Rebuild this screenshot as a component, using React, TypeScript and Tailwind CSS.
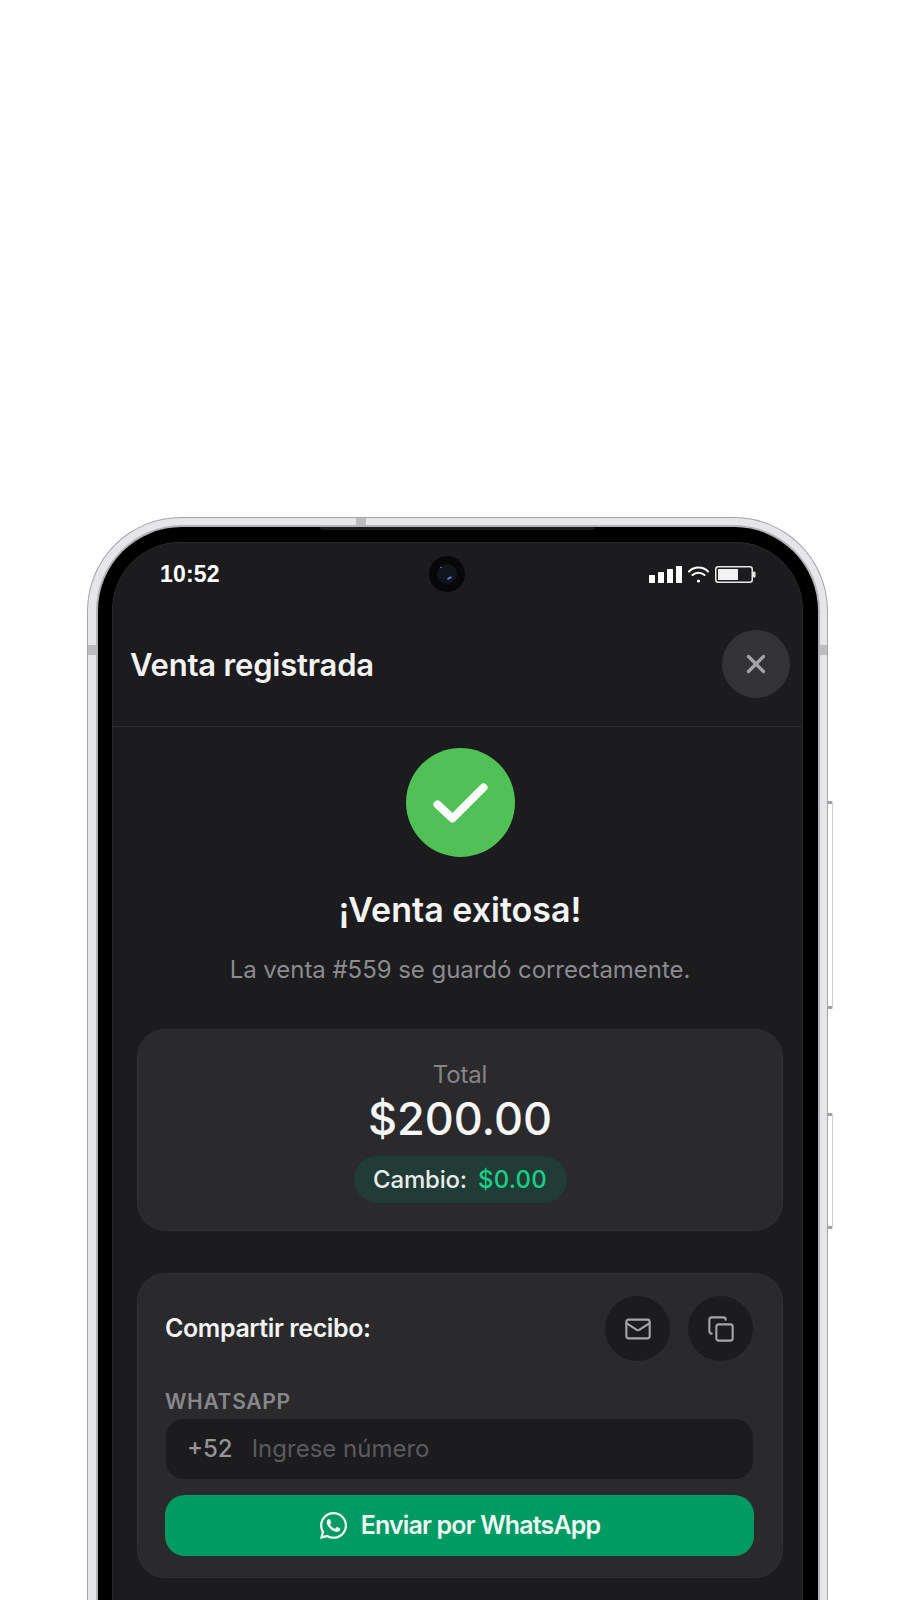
import { Copy, Mail, X } from "lucide-react";
import { FaWhatsapp } from "react-icons/fa";

export default function App() {
  return (
    <div className="h-[1600px] w-[900px] overflow-hidden bg-white pl-[87px] pt-[517px] font-['Inter',sans-serif]">
      <div className="relative h-[1300px] w-[741px]">
        {/* side keys */}
        <div className="absolute left-[741px] top-[284px] h-[208px] w-[5px] rounded-r-[2px] border-y-[3px] border-r border-y-[#a0a0a4] border-r-[#cfcfd2] bg-white" />
        <div className="absolute left-[741px] top-[596px] h-[116px] w-[5px] rounded-r-[2px] border-y-[3px] border-r border-y-[#a0a0a4] border-r-[#cfcfd2] bg-white" />
        <div className="h-full rounded-t-[94px] bg-[#a4a4a8] p-[1px]">
          <div className="relative h-full rounded-t-[93px] bg-[#e6e6e8] pl-[10px] pr-[9px] pt-[9px]">
            {/* antenna bands */}
            <div className="absolute left-0 top-[127px] h-[10px] w-[9px] bg-[#bcbcc0]" />
            <div className="absolute right-0 top-[127px] h-[10px] w-[8px] bg-[#bcbcc0]" />
            <div className="absolute left-[268px] top-0 h-[8px] w-[10px] bg-[#bcbcc0]" />
            <div className="relative h-full rounded-t-[84px] bg-black pl-[14px] pr-[15px] pt-[15px] shadow-[0_0_0_2px_#b4b4b8]">
              {/* earpiece */}
              <div className="absolute left-[222px] top-[0px] h-[3px] w-[275px] rounded-b-[3px] bg-[#1a1a1a]" />
              <div className="relative h-full rounded-t-[68px] border border-b-0 border-[#29292b] bg-[#1c1c1e] text-white">
                {/* camera */}
                <div className="absolute left-[316px] top-[13px] flex h-[36px] w-[36px] items-center justify-center rounded-full bg-[#08080a]">
                  <div className="relative h-[20px] w-[20px] rounded-full bg-[#14141c]">
                    <div className="absolute left-[3px] top-[3px] h-[1px] w-[2px] rounded-full bg-[#6a70d0]" />
                    <div className="absolute left-[10px] top-[13px] h-[2px] w-[5px] -rotate-[30deg] rounded-full bg-[#6a78d8]" />
                  </div>
                </div>

                {/* status bar */}
                <div className="flex h-[63px] items-center justify-between pl-[47px] pr-[46px]">
                  <span className="font-['Liberation_Sans',sans-serif] text-[23px] font-bold leading-none tracking-[0.2px] text-white">10:52</span>
                  <div className="flex items-center gap-[6px]">
                    <svg width="33" height="17" viewBox="0 0 33 17" fill="#fff">
                      <rect x="0" y="9" width="6" height="8" rx="0.5" />
                      <rect x="9" y="6" width="6" height="11" rx="0.5" />
                      <rect x="18" y="3" width="6" height="14" rx="0.5" />
                      <rect x="27" y="0" width="6" height="17" rx="0.5" />
                    </svg>
                    <svg width="21" height="17" viewBox="0 0 21 17" fill="none" stroke="#fff" strokeWidth="2" strokeLinecap="round">
                      <path d="M1 5.5C6.3 0.3 14.7 0.3 20 5.5" />
                      <path d="M4.5 9C7.8 6 13.2 6 16.5 9" />
                      <circle cx="10.5" cy="15" r="1.6" fill="#fff" stroke="none" />
                    </svg>
                    <svg width="41" height="17" viewBox="0 0 41 17" fill="none">
                      <rect x="0.75" y="0.75" width="36.5" height="15.5" rx="2.5" stroke="#e8e8e8" strokeWidth="1.5" />
                      <rect x="3" y="3" width="20" height="11" fill="#f2f2f2" />
                      <rect x="38" y="5.5" width="2.5" height="6" rx="1" fill="#e8e8e8" />
                    </svg>
                  </div>
                </div>

                {/* header */}
                <div className="flex items-center justify-between border-b border-[#2f2f31] pb-[28px] pl-[17px] pr-[12px] pt-[24px]">
                  <h1 className="text-[31px] font-semibold leading-none tracking-[-0.2px] text-[#f2f2f3]">Venta registrada</h1>
                  <div className="flex h-[68px] w-[68px] items-center justify-center rounded-full bg-[#333335] text-[#a6a6a8]">
                    <X size={30} strokeWidth={2.6} />
                  </div>
                </div>

                {/* body */}
                <div className="flex flex-col items-center pl-[24px] pr-[19px] pt-[21px]">
                  <div className="flex h-[109px] w-[109px] items-center justify-center rounded-full bg-[#4fc156]">
                    <svg width="55" height="40" viewBox="0 0 55 40" fill="none" stroke="#fff" strokeWidth="8" strokeLinecap="round" strokeLinejoin="round">
                      <path d="M4.5 21.5L19.5 35.5L50.5 4.5" />
                    </svg>
                  </div>
                  <h2 className="mt-[33px] text-[34px] font-semibold leading-[40px] tracking-normal text-[#f4f4f5]">¡Venta exitosa!</h2>
                  <p className="mt-[25px] text-[24px] font-normal leading-[30px] tracking-[-0.05px] text-[#8b8b90]">La venta #559 se guardó correctamente.</p>

                  {/* total */}
                  <div className="mt-[44px] flex h-[202px] w-full flex-col items-center rounded-[28px] border border-[#303032] bg-[#2a2a2c] pt-[30px]">
                    <span className="text-[24px] font-normal leading-[30px] tracking-[-0.2px] text-[#858589]">Total</span>
                    <span className="mt-[2px] text-[45px] font-medium leading-[54px] text-[#f6f6f7]">$200.00</span>
                    <div className="mt-[10px] flex h-[47px] w-[213px] items-center justify-center gap-[11px] rounded-full bg-[#213b36] text-[24px] font-medium leading-none">
                      <span className="tracking-[-0.2px] text-[#e9ecea]">Cambio:</span>
                      <span className="tracking-[0.2px] text-[#19cf85]">$0.00</span>
                    </div>
                  </div>

                  {/* share */}
                  <div className="mt-[42px] flex h-[305px] w-full flex-col rounded-[28px] border border-[#303032] bg-[#2a2a2c] pl-[27px] pr-[28px] pt-[22px]">
                    <div className="flex items-center justify-between">
                      <span className="text-[25px] font-semibold leading-none tracking-[-0.4px] text-[#f2f2f3]">Compartir recibo:</span>
                      <div className="mr-[1px] flex gap-[18px]">
                        <div className="flex h-[65px] w-[65px] items-center justify-center rounded-full bg-[#1c1c1e] text-[#a6a6a8]">
                          <Mail size={28} strokeWidth={1.8} />
                        </div>
                        <div className="flex h-[65px] w-[65px] items-center justify-center rounded-full bg-[#1c1c1e] text-[#a6a6a8]">
                          <Copy size={28} strokeWidth={1.8} />
                        </div>
                      </div>
                    </div>
                    <span className="mt-[28px] text-[21px] font-semibold leading-[26px] tracking-[0.7px] text-[#88888c]">WHATSAPP</span>
                    <div className="ml-[1px] mt-[4px] flex h-[60px] w-[587px] items-center gap-[19px] rounded-[18px] bg-[#1c1c1e] pl-[21px]">
                      <span className="text-[24px] font-medium leading-none text-[#949498]">+52</span>
                      <span className="text-[24px] font-normal leading-none tracking-normal text-[#5a5a5e]">Ingrese número</span>
                    </div>
                    <div className="mt-[16px] flex h-[61px] w-[589px] items-center justify-center gap-[12px] rounded-[20px] bg-[#009a64] pr-[1px] text-[#eef8f3]">
                      <FaWhatsapp size={31} />
                      <span className="text-[25px] font-semibold leading-none tracking-[-0.85px]">Enviar por WhatsApp</span>
                    </div>
                  </div>
                </div>
              </div>
            </div>
          </div>
        </div>
      </div>
    </div>
  );
}
